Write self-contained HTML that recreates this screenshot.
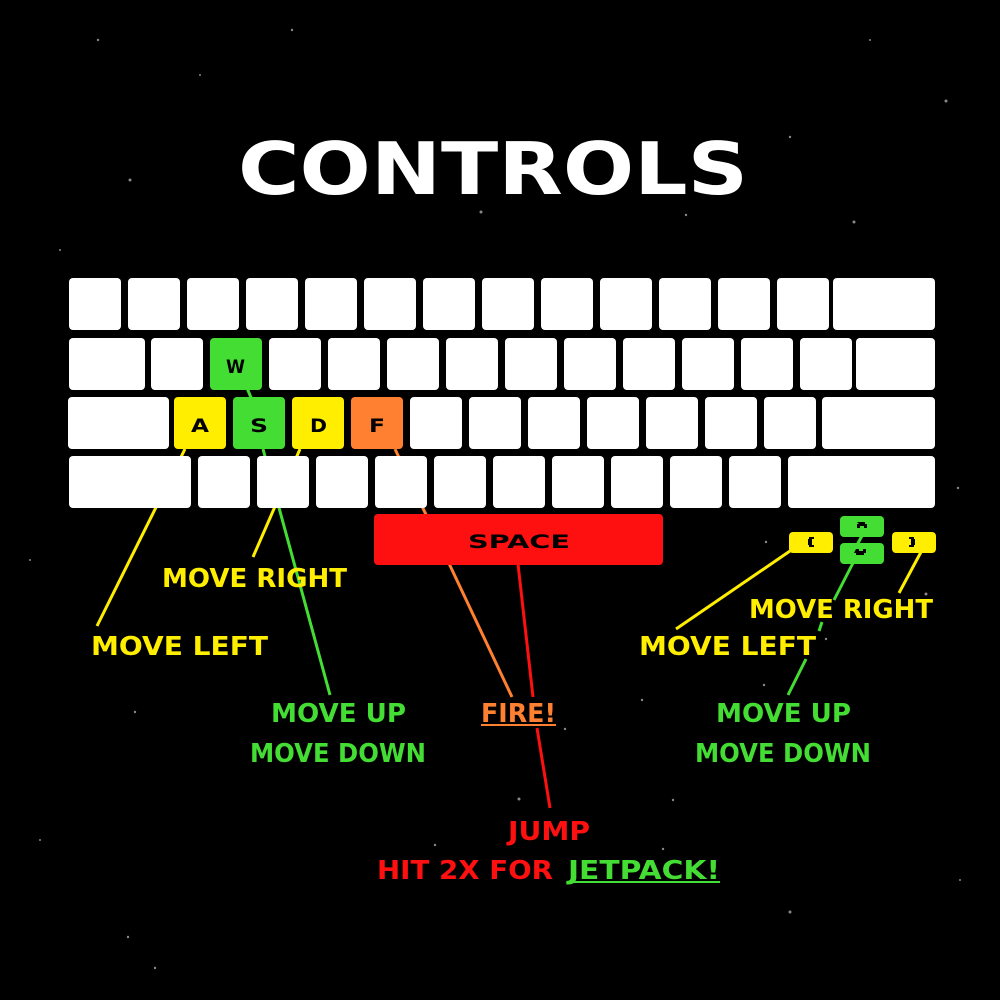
<!DOCTYPE html>
<html><head><meta charset="utf-8"><style>html,body{margin:0;padding:0;background:#000;width:1000px;height:1000px;overflow:hidden}</style></head>
<body>
<svg width="1000" height="1000" xmlns="http://www.w3.org/2000/svg" style="display:block;background:#000">
<g fill="#888">
<circle cx="98" cy="40" r="1.2"/><circle cx="292" cy="30" r="1.2"/><circle cx="130" cy="180" r="1.5"/><circle cx="481" cy="212" r="1.5"/><circle cx="686" cy="215" r="1.2"/><circle cx="854" cy="222" r="1.5"/><circle cx="946" cy="101" r="1.5"/><circle cx="790" cy="137" r="1.2"/><circle cx="60" cy="250" r="1"/><circle cx="958" cy="488" r="1.2"/><circle cx="766" cy="542" r="1.2"/><circle cx="926" cy="594" r="1.5"/><circle cx="826" cy="639" r="1.2"/><circle cx="764" cy="685" r="1.2"/><circle cx="642" cy="700" r="1.2"/><circle cx="135" cy="712" r="1.2"/><circle cx="565" cy="729" r="1.2"/><circle cx="519" cy="799" r="1.5"/><circle cx="673" cy="800" r="1.2"/><circle cx="435" cy="845" r="1.2"/><circle cx="663" cy="849" r="1.2"/><circle cx="790" cy="912" r="1.5"/><circle cx="128" cy="937" r="1.2"/><circle cx="155" cy="968" r="1.2"/><circle cx="870" cy="40" r="1"/><circle cx="200" cy="75" r="1"/><circle cx="920" cy="400" r="1"/><circle cx="30" cy="560" r="1"/><circle cx="40" cy="840" r="1"/><circle cx="960" cy="880" r="1"/>
</g>
<text x="238" y="194" font-family="DejaVu Sans, sans-serif" font-weight="bold" font-size="72" fill="#fff" textLength="510" lengthAdjust="spacingAndGlyphs">CONTROLS</text>

<g stroke-width="3" fill="none">
<line x1="247" y1="388" x2="252" y2="400" stroke="#44dd33"/>
<line x1="185" y1="449" x2="97" y2="626" stroke="#ffee00"/>
<line x1="300" y1="449" x2="253" y2="557" stroke="#ffee00"/>
<line x1="263" y1="449" x2="330" y2="695" stroke="#44dd33"/>
<line x1="395" y1="449" x2="512" y2="697" stroke="#ff8030"/>
<line x1="518" y1="564" x2="533" y2="697" stroke="#ff1010"/>
<line x1="537" y1="728" x2="550" y2="808" stroke="#ff1010"/>
<line x1="790" y1="551" x2="676" y2="629" stroke="#ffee00"/>
<line x1="921" y1="552" x2="899" y2="593" stroke="#ffee00"/>
<line x1="853" y1="563" x2="834" y2="600" stroke="#44dd33"/>
<line x1="822" y1="622" x2="819" y2="631" stroke="#44dd33"/>
<line x1="806" y1="659" x2="788" y2="695" stroke="#44dd33"/>
<line x1="863" y1="534" x2="857" y2="545" stroke="#44dd33"/>
</g>

<g fill="#fff">
<rect x="69" y="278" width="52" height="52" rx="4"/><rect x="128" y="278" width="52" height="52" rx="4"/><rect x="187" y="278" width="52" height="52" rx="4"/><rect x="246" y="278" width="52" height="52" rx="4"/><rect x="305" y="278" width="52" height="52" rx="4"/><rect x="364" y="278" width="52" height="52" rx="4"/><rect x="423" y="278" width="52" height="52" rx="4"/><rect x="482" y="278" width="52" height="52" rx="4"/><rect x="541" y="278" width="52" height="52" rx="4"/><rect x="600" y="278" width="52" height="52" rx="4"/><rect x="659" y="278" width="52" height="52" rx="4"/><rect x="718" y="278" width="52" height="52" rx="4"/><rect x="777" y="278" width="52" height="52" rx="4"/><rect x="833" y="278" width="102" height="52" rx="4"/>
<rect x="69" y="338" width="76" height="52" rx="4"/><rect x="151" y="338" width="52" height="52" rx="4"/><rect x="269" y="338" width="52" height="52" rx="4"/><rect x="328" y="338" width="52" height="52" rx="4"/><rect x="387" y="338" width="52" height="52" rx="4"/><rect x="446" y="338" width="52" height="52" rx="4"/><rect x="505" y="338" width="52" height="52" rx="4"/><rect x="564" y="338" width="52" height="52" rx="4"/><rect x="623" y="338" width="52" height="52" rx="4"/><rect x="682" y="338" width="52" height="52" rx="4"/><rect x="741" y="338" width="52" height="52" rx="4"/><rect x="800" y="338" width="52" height="52" rx="4"/><rect x="856" y="338" width="79" height="52" rx="4"/>
<rect x="68" y="397" width="101" height="52" rx="4"/><rect x="410" y="397" width="52" height="52" rx="4"/><rect x="469" y="397" width="52" height="52" rx="4"/><rect x="528" y="397" width="52" height="52" rx="4"/><rect x="587" y="397" width="52" height="52" rx="4"/><rect x="646" y="397" width="52" height="52" rx="4"/><rect x="705" y="397" width="52" height="52" rx="4"/><rect x="764" y="397" width="52" height="52" rx="4"/><rect x="822" y="397" width="113" height="52" rx="4"/>
<rect x="69" y="456" width="122" height="52" rx="4"/><rect x="198" y="456" width="52" height="52" rx="4"/><rect x="257" y="456" width="52" height="52" rx="4"/><rect x="316" y="456" width="52" height="52" rx="4"/><rect x="375" y="456" width="52" height="52" rx="4"/><rect x="434" y="456" width="52" height="52" rx="4"/><rect x="493" y="456" width="52" height="52" rx="4"/><rect x="552" y="456" width="52" height="52" rx="4"/><rect x="611" y="456" width="52" height="52" rx="4"/><rect x="670" y="456" width="52" height="52" rx="4"/><rect x="729" y="456" width="52" height="52" rx="4"/><rect x="788" y="456" width="147" height="52" rx="4"/>
</g>
<rect x="210" y="338" width="52" height="52" rx="4" fill="#44dd33"/>
<rect x="174" y="397" width="52" height="52" rx="4" fill="#ffee00"/>
<rect x="233" y="397" width="52" height="52" rx="4" fill="#44dd33"/>
<rect x="292" y="397" width="52" height="52" rx="4" fill="#ffee00"/>
<rect x="351" y="397" width="52" height="52" rx="4" fill="#ff8030"/>
<rect x="374" y="514" width="289" height="51" rx="4" fill="#ff1010"/>
<rect x="789" y="532" width="44" height="21" rx="4" fill="#ffee00"/>
<rect x="840" y="516" width="44" height="21" rx="4" fill="#44dd33"/>
<rect x="840" y="543" width="44" height="21" rx="4" fill="#44dd33"/>
<rect x="892" y="532" width="44" height="21" rx="4" fill="#ffee00"/>
<g fill="#000">
<path d="M809 537h5v2h-2v6h2v2h-5v-2h-1v-6h1z"/><path d="M914 537h-5v2h2v6h-2v2h5v-2h1v-6h-1z"/>
<path d="M857 522h8v2h2v4h-3v-2h-4v2h-3v-4h2z"/><path d="M855 549h3v2h4v-2h3v4h-2v2h-8v-2h-2z" transform="translate(1,0)"/>
</g>
<g font-family="DejaVu Sans, sans-serif" font-weight="bold" fill="#000">
<text x="226" y="373" font-size="19" textLength="19" lengthAdjust="spacingAndGlyphs">W</text>
<text x="191" y="432" font-size="19" textLength="18" lengthAdjust="spacingAndGlyphs">A</text>
<text x="250" y="432" font-size="19" textLength="18" lengthAdjust="spacingAndGlyphs">S</text>
<text x="310" y="432" font-size="19" textLength="17" lengthAdjust="spacingAndGlyphs">D</text>
<text x="369" y="432" font-size="19" textLength="16" lengthAdjust="spacingAndGlyphs">F</text>
<text x="468" y="548" font-size="19" textLength="102" lengthAdjust="spacingAndGlyphs">SPACE</text>
</g>
<g font-family="DejaVu Sans, sans-serif" font-weight="bold" font-size="26">
<text x="162" y="587" fill="#ffee00" textLength="185" lengthAdjust="spacingAndGlyphs">MOVE RIGHT</text>
<text x="91" y="655" fill="#ffee00" textLength="177" lengthAdjust="spacingAndGlyphs">MOVE LEFT</text>
<text x="271" y="722" fill="#44dd33" textLength="135" lengthAdjust="spacingAndGlyphs">MOVE UP</text>
<text x="250" y="762" fill="#44dd33" textLength="176" lengthAdjust="spacingAndGlyphs">MOVE DOWN</text>
<text x="481" y="722" fill="#ff8030" textLength="75" lengthAdjust="spacingAndGlyphs">FIRE!</text>
<text x="508" y="840" fill="#ff1010" textLength="82" lengthAdjust="spacingAndGlyphs">JUMP</text>
<text x="377" y="879" fill="#ff1010" textLength="176" lengthAdjust="spacingAndGlyphs">HIT 2X FOR</text>
<text x="568" y="879" fill="#44dd33" textLength="152" lengthAdjust="spacingAndGlyphs">JETPACK!</text>
<text x="749" y="618" fill="#ffee00" textLength="184" lengthAdjust="spacingAndGlyphs">MOVE RIGHT</text>
<text x="639" y="655" fill="#ffee00" textLength="177" lengthAdjust="spacingAndGlyphs">MOVE LEFT</text>
<text x="716" y="722" fill="#44dd33" textLength="135" lengthAdjust="spacingAndGlyphs">MOVE UP</text>
<text x="695" y="762" fill="#44dd33" textLength="176" lengthAdjust="spacingAndGlyphs">MOVE DOWN</text>
</g>
<rect x="481" y="724" width="75" height="2" fill="#ff8030"/>
<rect x="568" y="881" width="152" height="2" fill="#44dd33"/>
</svg>
</body></html>
